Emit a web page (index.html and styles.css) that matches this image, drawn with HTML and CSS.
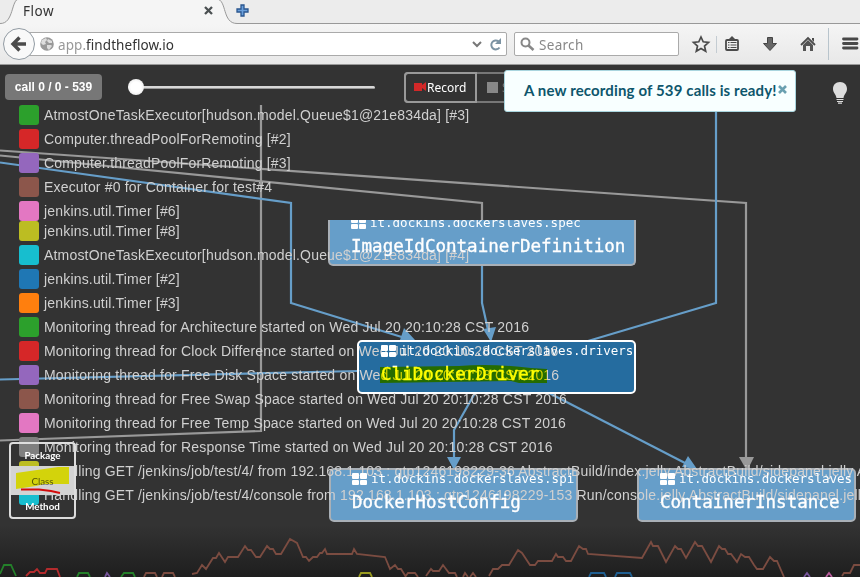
FILE: index.html
```html
<!DOCTYPE html>
<html lang="en">
<head>
<meta charset="utf-8">
<title>Flow</title>
<link rel="stylesheet" href="styles.css">
</head>
<body>
<header class="chrome">
  <div class="tabs">
    <svg class="tab-shape" width="860" height="25" viewBox="0 0 860 25"><path d="M0 23.5C14 24 11 0 19 0H217C227 0 222 23.500 237 23.500H860V25H0Z" fill="#f5f5f5"/><path d="M0 23.500C14 24 11 -1 19 -1M217 -1C227 0 222 23.500 237 23.500H860" fill="none" stroke="#999"/></svg>
    <span class="tab-title">Flow</span>
    <svg class="tab-close" width="9" height="9" viewBox="0 0 9 9"><path d="M1 1L8 8M8 1L1 8" stroke="#4b5052" stroke-width="2.300"/></svg>
    <svg class="tab-new" width="13" height="13" viewBox="0 0 13 13"><path d="M5 1h3v4h4v3H8v4H5V8H1V5h4z" fill="#6ba0dc" stroke="#2a568f" stroke-width="1.300"/></svg>
  </div>
  <div class="toolbar">
    <div class="address">
      <svg class="globe" width="14" height="14" viewBox="0 0 14 14"><circle cx="7" cy="7" r="6.800" fill="#999"/><path d="M2 3l4-2 1 2-2 2 1 2-3 1-2-2zM8 2l4 2 0 2-3 0-2-2zM7 8l4 0 1 1-3 4-2-2z" fill="#ddd"/></svg>
      <span class="url"><span class="sub">app.</span>findtheflow.io</span>
      <svg class="chev" width="10" height="7" viewBox="0 0 10 7"><path d="M1 1l4 4 4-4" fill="none" stroke="#777" stroke-width="2"/></svg>
      <svg width="13" height="13" viewBox="0 0 13 13"><path d="M10.500 9.500A4.500 4.500 0 1 1 9.500 3.300" fill="none" stroke="#7c93a3" stroke-width="2"/><path d="M12 0v6H6z" fill="#7c93a3"/></svg>
    </div>
    <div class="search">
      <svg width="15" height="15" viewBox="0 0 15 15"><circle cx="5.500" cy="5.500" r="4" fill="none" stroke="#888" stroke-width="2"/><path d="M8.500 8.500l5 4.500" stroke="#888" stroke-width="2.600"/></svg>
      <span>Search</span>
    </div>
    <svg class="tools" width="181" height="40" viewBox="679 24 181 40">
      <path d="M701 37l2.200 4.800 5.300.6-4 3.600 1.200 5.300-4.700-2.700-4.700 2.700 1.200-5.300-4-3.600 5.300-.6z" fill="none" stroke="#4b4b4b" stroke-width="1.700"/>
      <path d="M716.500 36v17" stroke="#c4ccd2"/>
      <rect x="726" y="40" width="12" height="10" rx="1" fill="none" stroke="#4b4b4b" stroke-width="1.800"/><path d="M728 40l4-4 4 4z" fill="#4b4b4b"/><path d="M728 42.500h1.500m1 0h6M728 45h1.500m1 0h6M728 47.500h1.500m1 0h6" stroke="#4b4b4b" stroke-width="1.200"/>
      <path d="M767.500 37.500h5v6h4l-6.500 7-6.500-7h4z" fill="#666" stroke="#444"/>
      <path d="M801 45l7-7 7 7" fill="none" stroke="#4b4b4b" stroke-width="1.800"/><path d="M803 45l5-5 5 5v6h-3v-5h-4v5h-3z" fill="#555"/><path d="M812 38h2v4l-2-2z" fill="#4b4b4b"/>
      <path d="M828.500 28v32" stroke="#b8c4cc"/>
      <path d="M843.500 39h13.500M843.500 43.500h13.500M843.500 48h13.500" stroke="#484848" stroke-width="2.800" stroke-linecap="round"/>
    </svg>
    <svg class="back" width="34" height="34" viewBox="0 0 34 34"><circle cx="17" cy="17" r="15.500" fill="#f9f9f9" stroke="#929ba3"/><path d="M11.500 17H24M17.500 10.500L11 17l6.500 6.500" fill="none" stroke="#4b4b4b" stroke-width="3.400"/></svg>
  </div>
</header>
<main class="flow">
  <svg class="edges" width="860" height="512" viewBox="0 65 860 512">
    <defs><linearGradient id="shade" x1="0" y1="0" x2="0" y2="1"><stop offset="0" stop-color="#333"/><stop offset="1" stop-color="#1e1e1e"/></linearGradient></defs>
    <rect x="0" y="525" width="860" height="52" fill="url(#shade)"/>
    <g fill="none" stroke="#999" stroke-width="2.200">
      <path d="M0 150.500L746 203V462"/><path d="M0 155.500L482 203V222"/><path d="M261 105V431L0 440.500"/>
    </g>
    <g fill="none" stroke="#669ec9" stroke-width="2.200">
      <path d="M0 162.500L291 203V303L405 338"/><path d="M0 379.500L358 371"/><path d="M716 108V303L588 341"/><path d="M482 264V303L488 330"/><path d="M475 393L454 430V460"/><path d="M549 393L685 463"/>
    </g>
    <path d="M739 457h15l-7 14z" fill="#999"/>
    <path d="M447 457h14l-7 13zM682 467l6-11 9 13zM483 329l13-2-5 15zM400 340l4-12 11 12z" fill="#669ec9"/>
    <g class="timeline" fill="none" stroke-width="1.800">
      <g stroke="#7b4c41">
        <path d="M144 577l2-4h9l2 4M162 577l2-4h9l2 4M192 574l5-1 5-8 4 4 7-11h3l3-5 6 9 3-5h10l7-11 3 4h3l5 7h4l7-11 3 3h3l3 5h5l9-15 7 4 6 14h3l3 4 4-4h4l3-4h2l3-4 2 5h25l2-5 3 5 28 3 5 12 5-4 3 4h3l5 8M405 577l3-4h7l3 4M426 576l5-7 2 2h6l4-6 6 8h6l2 4M463 577l2-4 3 4M470 577l3-4 3 4M489 576l4-7h5l4-4h7l9-15 4 3 8 12h5l3-4h14l4-7 2 3h5l3 4h5l8-15 4 3h3l2 5 54 4 9-16 2 4h5l8 16 9-16 3 3h3l5 9 9-16 3 4h4l9 16 8-16 3 3h3l3 5h3l6 8 4-8 4 3h4l5 8 3 4h6l7-12 4 4h3l7 16M842 576l2-3h6l4-8h6"/>
      </g>
      <path d="M0 574l4-9h7l5 11M77 577l2-4h9l2 4M121 577l3-4h9l2 4" stroke="#24802a"/>
      <path d="M26 576l4-4h4l3-3 3 4h5l2-4h10l3 8" stroke="#b32b2d"/>
      <path d="M105 577l2-4 3 4M804 577l3-4 3 4" stroke="#76559b"/><path d="M826 577l3-4 3 4" stroke="#b85c9c"/>
      <path d="M359 577l2-4h9l2 4" stroke="#999b20"/><path d="M589 577l2-4h13l2 4M615 577l2-4h13l2 4" stroke="#205f91"/>
    </g>
  </svg>

  <section class="node spec"><div class="pkg"><i class="grid"><b></b><b></b><b></b><b></b></i>it.dockins.dockerslaves.spec</div><div class="cls">ImageIdContainerDefinition</div></section>
  <section class="node driver"><div class="pkg"><i class="grid"><b></b><b></b><b></b><b></b></i>it.dockins.dockerslaves.drivers</div><div class="cls">CliDockerDriver</div></section>
  <section class="node host"><div class="pkg"><i class="grid"><b></b><b></b><b></b><b></b></i>it.dockins.dockerslaves.spi</div><div class="cls">DockerHostConfig</div></section>
  <section class="node instance"><div class="pkg"><i class="grid"><b></b><b></b><b></b><b></b></i>it.dockins.dockerslaves</div><div class="cls">ContainerInstance</div></section>

  <div class="controls">
    <span class="calls">call 0 / 0 - 539</span>
    <div class="slider"><span class="knob"></span></div>
    <div class="buttons">
      <span class="record"><svg width="13" height="10" viewBox="0 0 13 10"><path d="M0 1h8v2l4-3v9L8 6v3H0z" fill="#d22828"/></svg>Record</span>
      <span class="stop"><i></i>Stop</span>
    </div>
  </div>
  <ul class="threads">
    <li class="green">AtmostOneTaskExecutor[hudson.model.Queue$1@21e834da] [#3]</li>
    <li class="red">Computer.threadPoolForRemoting [#2]</li>
    <li class="purple">Computer.threadPoolForRemoting [#3]</li>
    <li class="brown">Executor #0 for Container for test#4</li>
    <li class="pink tight">jenkins.util.Timer [#6]</li>
    <li class="olive">jenkins.util.Timer [#8]</li>
    <li class="cyan">AtmostOneTaskExecutor[hudson.model.Queue$1@21e834da] [#4]</li>
    <li class="blue">jenkins.util.Timer [#2]</li>
    <li class="orange">jenkins.util.Timer [#3]</li>
    <li class="green">Monitoring thread for Architecture started on Wed Jul 20 20:10:28 CST 2016</li>
    <li class="red">Monitoring thread for Clock Difference started on Wed Jul 20 20:10:28 CST 2016</li>
    <li class="purple">Monitoring thread for Free Disk Space started on Wed Jul 20 20:10:28 CST 2016</li>
    <li class="brown">Monitoring thread for Free Swap Space started on Wed Jul 20 20:10:28 CST 2016</li>
    <li class="pink">Monitoring thread for Free Temp Space started on Wed Jul 20 20:10:28 CST 2016</li>
    <li class="gray">Monitoring thread for Response Time started on Wed Jul 20 20:10:28 CST 2016</li>
    <li class="olive">Handling GET /jenkins/job/test/4/ from 192.168.1.103 : qtp1246198229-36 AbstractBuild/index.jelly AbstractBuild/sidepanel.jelly Actionable</li>
    <li class="cyan">Handling GET /jenkins/job/test/4/console from 192.168.1.103 : qtp1246198229-153 Run/console.jelly AbstractBuild/sidepanel.jelly</li>
  </ul>
  <svg class="marker" width="172" height="22" viewBox="0 0 172 22"><path d="M1 3L80 2Q112-1 152 4L168 5V19H140L132 17 1 19Z" fill="#ff0"/></svg>
  <div class="levels">
    <span>Package</span>
    <span class="active">Class<svg class="scribble" width="66" height="30" viewBox="0 0 66 30"><path d="M6 7L48 1h11v17H34l-8 2-20 3z" fill="#ff0"/><path d="M11 23.500h18l12 1.500 9 2" stroke="#f00" stroke-width="2" fill="none"/></svg></span>
    <span>Method</span>
  </div>
  <div class="notice">A new recording of 539 calls is ready!<svg width="9" height="9" viewBox="0 0 9 9"><path d="M1 1l7 7M8 1L1 8" stroke="#6aa0b0" stroke-width="2.600"/></svg></div>
  <svg class="bulb" width="16" height="24" viewBox="0 0 16 24"><path d="M8 1C3.500 1 1 4 1 8c0 3.500 3 5.500 3.500 9h7C12 13.500 15 11.500 15 8c0-4-2.500-7-7-7z" fill="#ddd"/><path d="M4.500 18.500h7M5 20.500h6M6 22.200h4" stroke="#ddd" stroke-width="1.200"/></svg>
</main>
</body>
</html>
```
FILE: styles.css
```css
* { box-sizing: border-box; }
body { margin: 0; width: 860px; height: 577px; overflow: hidden; background: #333; }
svg { display: block; flex: none; }
.chrome { height: 65px; font: 13.5px "Noto Sans", sans-serif; color: #333; background: #ececec; border-bottom: 1px solid #999; }
.tabs { position: relative; height: 24px; display: flex; align-items: center; }
.tab-shape { position: absolute; left: 0; top: 0; }
.tab-title { position: relative; width: 182px; padding-left: 23px; line-height: 23px; height: 24px; letter-spacing: .5px; }
.tab-close { position: relative; margin: 0 0 4px 22px; }
.tab-new { position: relative; margin: 0 0 4px 23px; }
.toolbar { position: relative; height: 40px; display: flex; align-items: center; background: linear-gradient(#f5f5f5, #e8e8e8); }
.address { margin-left: 19px; width: 488px; height: 24px; display: flex; align-items: center; padding: 0 4px 0 20px; background: #fff; border: 1px solid #aaa; border-radius: 2px; }
.url { flex: 1; margin-left: 4px; line-height: 22px; padding-top: 2px; letter-spacing: .07px; }
.sub { color: #999; }
.chev { margin-right: 7px; }
.search { margin-left: 7px; width: 165px; height: 24px; display: flex; align-items: center; gap: 4px; padding-left: 5px; background: #fff; border: 1px solid #aaa; border-radius: 2px; color: #888; letter-spacing: .3px; }
.search span { padding-top: 2px; }
.back { position: absolute; left: 2px; top: 3px; }
.flow { position: relative; height: 512px; overflow: hidden; font-family: Lato, sans-serif; color: #ddd; }
.edges { position: absolute; left: 0; top: 0; }
.node { position: absolute; height: 54px; padding: 0 0 0 21px; background: #669ec9; border: 2px solid #a9b0b7; border-radius: 5px; color: #fff; font-family: "DejaVu Sans Mono", monospace; white-space: nowrap; overflow: hidden; }
.pkg, .cls { position: relative; z-index: 2; }
.pkg { display: flex; align-items: center; height: 17px; font-size: 12.5px; }
.grid { display: grid; grid-template-columns: 7px 7px; gap: 1px; margin: 1px 4px 0 0; }
.driver .grid { margin-left: 1px; }
.grid b { height: 5.5px; background: #fff; border-radius: 1px; }
.cls { height: 28px; line-height: 30px; font-size: 17.55px; -webkit-text-stroke: .35px #fff; }
.spec { left: 328px; top: 155px; width: 308px; height: 46px; border-top: 0; border-radius: 0 0 5px 5px; }
.spec .pkg { margin-top: -6px; }
.spec .cls { line-height: 31px; }
.driver { left: 357px; top: 275px; width: 279px; background: #256c9f; border-color: #fff; }
.driver .cls { padding-left: 1px; }
.marker { position: absolute; left: 379px; top: 299px; z-index: 3; mix-blend-mode: multiply; }
.host { left: 329px; top: 403px; width: 249px; }
.instance { left: 637px; top: 403px; width: 219px; }
.controls { position: relative; height: 40px; display: flex; align-items: center; padding: 4px 0 0 5px; }
.calls { width: 97px; height: 26px; border-radius: 4px; background: #777; color: #fff; text-align: center; font: bold 12px/26px "Liberation Sans", sans-serif; }
.slider { width: 247px; height: 3px; margin-left: 26px; background: #d8d8d8; border-bottom: 1px solid #999; border-radius: 2px; display: flex; align-items: center; }
.knob { width: 16px; height: 16px; border-radius: 50%; background: radial-gradient(#fff 45%, #ddd); }
.buttons { margin-left: 29px; width: 120px; height: 31px; display: flex; border: 2px solid #777; border-radius: 4px; font: 12px "Noto Sans", sans-serif; }
.record { flex: none; width: 73px; margin: -2px 0 -2px -2px; border: 2px solid #999; border-radius: 4px 0 0 4px; display: flex; align-items: center; padding-left: 8px; color: #fff; }
.stop { display: flex; align-items: center; gap: 4px; padding-left: 10px; color: #777; }
.stop i { width: 11px; height: 11px; background: #888; }
.threads { position: relative; z-index: 1; margin: 0; padding: 0 0 0 19px; list-style: none; font: 14px/21px "Liberation Sans", sans-serif; letter-spacing: .18px; color: #d0d0d0; white-space: nowrap; }
.threads li { display: flex; height: 20px; margin-bottom: 4px; }
.threads li.tight { margin-bottom: 0; }
.threads li::before { content: ""; flex: none; width: 20px; height: 20px; margin-right: 5px; border-radius: 3px; background: var(--thread); }
.green { --thread: #2ca02c; }
.red { --thread: #d62728; }
.purple { --thread: #9467bd; }
.brown { --thread: #8c564b; }
.pink { --thread: #e377c2; }
.olive { --thread: #bcbd22; }
.cyan { --thread: #17becf; }
.blue { --thread: #1f77b4; }
.orange { --thread: #ff7f0e; }
.gray { --thread: #7f7f7f; }
.levels { position: absolute; z-index: 4; left: 9px; top: 377px; width: 67px; height: 77px; display: flex; flex-direction: column; border: 2px solid #ddd; border-radius: 4px; overflow: hidden; color: #fff; font: bold 9.8px/22px Lato, sans-serif; text-align: center; }
.levels span { height: 22px; }
.levels .active { position: relative; height: 29px; line-height: 31px; background: #d3d3d3; color: #555; font-weight: normal; }
.scribble { position: absolute; left: -1px; top: 0; mix-blend-mode: multiply; opacity: .95; }
.notice { position: absolute; z-index: 4; left: 504px; top: 5px; width: 292px; height: 42px; display: flex; align-items: center; padding: 0 0 2px 19px; background: #f8ffff; border: 1px solid #a9d5de; border-radius: 3px; color: #0e566c; font-size: 15px; letter-spacing: .14px; font-weight: bold; white-space: nowrap; }
.notice svg { margin: -1px 0 0 1px; }
.bulb { position: absolute; left: 832px; top: 16px; }
```
